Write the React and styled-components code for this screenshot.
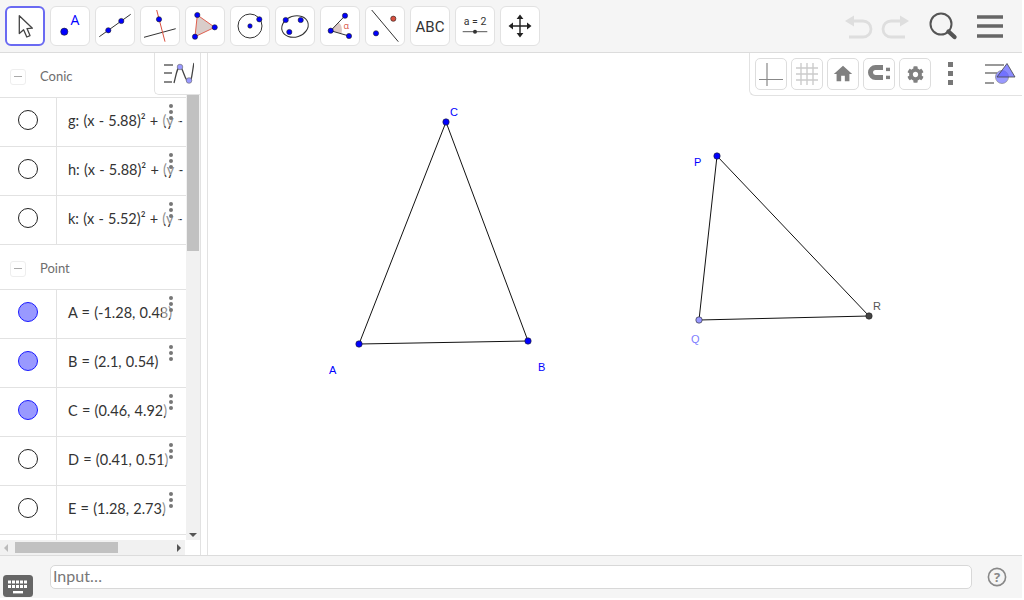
import React from "react";
import styled, { createGlobalStyle } from "styled-components";
import { MdHome } from "react-icons/md";
import { FaCog } from "react-icons/fa";

const GlobalStyle = createGlobalStyle`
  html, body {
    margin: 0;
    padding: 0;
    background: #fff;
    font-family: Lato, "Open Sans", "Liberation Sans", sans-serif;
  }
  * {
    box-sizing: border-box;
  }
`;

const Page = styled.div`
  width: 1022px;
  height: 598px;
  display: flex;
  flex-direction: column;
  overflow: hidden;
`;

const Toolbar = styled.div`
  height: 53px;
  flex: none;
  display: flex;
  align-items: flex-start;
  gap: 5px;
  padding: 6px 0 0 5px;
  background: #f5f5f5;
  border-bottom: 1px solid #dcdcdc;
`;

const ToolButton = styled.div`
  width: 40px;
  height: 40px;
  flex: none;
  background: #fff;
  border-radius: 6px;
  border: ${(props) => (props.$active ? "2px solid #6a6af2" : "1px solid #e2e2e2")};
  svg {
    display: block;
    margin: ${(props) => (props.$active ? "-2px" : "-1px")};
  }
`;

const ToolbarRight = styled.div`
  margin-left: auto;
  padding: 2px 2px 0 0;
  svg {
    display: block;
  }
`;

const Main = styled.div`
  flex: 1;
  min-height: 0;
  display: flex;
`;

const AlgebraPanel = styled.div`
  width: 201px;
  flex: none;
  position: relative;
  display: flex;
  flex-direction: column;
  border-right: 1px solid #e2e2e2;
`;

const AlgebraBody = styled.div`
  flex: 1;
  min-height: 0;
  display: flex;
`;

const AlgebraList = styled.div`
  width: 186px;
  flex: none;
  overflow: hidden;
  position: relative;
`;

const GroupHeader = styled.div`
  height: 45px;
  display: flex;
  align-items: center;
  gap: 14px;
  padding: 1px 0 0 10px;
  border-bottom: 1px solid #e2e2e2;
  color: #6e6e6e;
  font-size: 13px;
`;

const CollapseBox = styled.span`
  width: 16px;
  height: 16px;
  margin-top: 2px;
  display: flex;
  align-items: center;
  justify-content: center;
  border: 1px solid #eee;
  border-radius: 3px;
  &::before {
    content: "";
    width: 8px;
    height: 1px;
    background: #aaa;
  }
`;

const Row = styled.div`
  height: 49px;
  display: flex;
  position: relative;
  border-bottom: 1px solid #e2e2e2;
`;

const MarbleCell = styled.div`
  width: 57px;
  flex: none;
  display: flex;
  align-items: center;
  justify-content: center;
  padding-bottom: 5px;
  border-right: 1px solid #e2e2e2;
`;

const Marble = styled.span`
  width: 20px;
  height: 20px;
  border-radius: 50%;
  background: ${(props) => (props.$filled ? "#9999ff" : "#fff")};
  border: 1px solid ${(props) => (props.$filled ? "#1a1aff" : "#222")};
`;

const RowText = styled.div`
  flex: 1;
  padding: 13px 0 0 11px;
  font-size: 14.5px;
  word-spacing: 0.5px;
  line-height: 19px;
  color: #333;
  white-space: nowrap;
  overflow: hidden;
`;

const MoreButton = styled.div`
  position: absolute;
  left: 162px;
  top: 2px;
  width: 18px;
  height: 26px;
  display: flex;
  flex-direction: column;
  align-items: center;
  gap: 2.2px;
  padding-top: 4px;
  background: rgba(255, 255, 255, 0.45);
  span {
    width: 4px;
    height: 4px;
    border-radius: 50%;
    background: #777;
  }
`;

const VScrollTrack = styled.div`
  width: 14px;
  flex: none;
  background: #f1f1f1;
  margin-bottom: 15px;
  display: flex;
  flex-direction: column;
  align-items: center;
  justify-content: space-between;
  padding-bottom: 3px;
`;

const VScrollThumb = styled.div`
  width: 12px;
  height: 198px;
  margin-right: 1px;
  background: #c1c1c1;
`;

const DownArrow = styled.div`
  width: 0;
  height: 0;
  border-left: 4px solid transparent;
  border-right: 4px solid transparent;
  border-top: 4px solid #555;
`;

const HScrollTrack = styled.div`
  position: absolute;
  left: 0;
  bottom: 0;
  width: 185px;
  height: 15px;
  background: #f1f1f1;
  display: flex;
  align-items: center;
  padding: 0 4px 0 4px;
`;

const HScrollThumb = styled.div`
  width: 103px;
  height: 11px;
  margin-left: 7px;
  background: #c1c1c1;
`;

const Arrow = styled.div`
  width: 0;
  height: 0;
  border-top: 4px solid transparent;
  border-bottom: 4px solid transparent;
  border-right: ${(props) => (props.$left ? "4px solid #bbb" : "none")};
  border-left: ${(props) => (props.$left ? "none" : "4px solid #555")};
  margin-left: ${(props) => (props.$left ? "0" : "auto")};
`;

const ViewToggle = styled.div`
  position: absolute;
  top: 0;
  right: 0;
  width: 46px;
  height: 42px;
  background: #fff;
  border-left: 1px solid #e2e2e2;
  border-bottom: 1px solid #e2e2e2;
  border-bottom-left-radius: 5px;
  display: flex;
  align-items: center;
  justify-content: center;
`;

const Graphics = styled.div`
  flex: 1;
  margin-left: 6px;
  position: relative;
  border-left: 1px solid #e2e2e2;
  svg.canvas {
    display: block;
  }
`;

const StyleBar = styled.div`
  position: absolute;
  top: 0;
  right: 0;
  width: 273px;
  height: 43px;
  background: #fff;
  border-left: 1px solid #e2e2e2;
  border-bottom: 1px solid #e2e2e2;
  border-bottom-left-radius: 6px;
  display: flex;
  align-items: flex-start;
  gap: 4px;
  padding: 5px 0 0 5px;
`;

const StyleButton = styled.div`
  width: 32px;
  height: 32px;
  flex: none;
  border: 1px solid #ddd;
  border-radius: 5px;
  display: flex;
  align-items: center;
  justify-content: center;
  color: #808080;
`;

const StyleDots = styled.div`
  margin: 4px 0 0 13px;
  display: flex;
  flex-direction: column;
  gap: 4px;
  span {
    width: 5px;
    height: 5px;
    background: #777;
  }
`;

const StyleViewIcon = styled.div`
  margin: 5px 0 0 28px;
  svg {
    display: block;
  }
`;

const InputBar = styled.div`
  height: 43px;
  flex: none;
  display: flex;
  align-items: flex-start;
  background: #f5f5f5;
  border-top: 1px solid #dcdcdc;
  padding: 9px 0 0 0;
`;

const KeyboardButton = styled.div`
  width: 30px;
  height: 22px;
  margin: 10px 0 0 3px;
  svg {
    display: block;
  }
`;

const InputField = styled.div`
  width: 922px;
  height: 24px;
  margin-left: 17px;
  background: #fff;
  border: 1px solid #d8d8d8;
  border-radius: 5px;
  padding-left: 2px;
  font-size: 16px;
  line-height: 19px;
  color: #777;
`;

const HelpButton = styled.div`
  margin: 2px 0 0 15px;
  svg {
    display: block;
  }
`;

const Label = styled.text`
  font-family: "Liberation Sans", Arial, sans-serif;
  font-size: 11px;
  fill: ${(props) => props.$color || "#0000ff"};
`;

const conics = ["g: (x - 5.88)² + (y -", "h: (x - 5.88)² + (y -", "k: (x - 5.52)² + (y -"];

const points = [
  { text: "A = (-1.28, 0.48)", filled: true },
  { text: "B = (2.1, 0.54)", filled: true },
  { text: "C = (0.46, 4.92)", filled: true },
  { text: "D = (0.41, 0.51)" },
  { text: "E = (1.28, 2.73)" },
  { text: "" },
];

const Pt = ({ x, y, r = 2.6, fill = "#0000ff" }) => (
  <circle cx={x} cy={y} r={r} fill={fill} stroke="#222" strokeWidth="0.6" />
);

const Icon = ({ children }) => (
  <svg width="40" height="40" viewBox="0 0 40 40">
    {children}
  </svg>
);

const tools = [
  <Icon key="move">
    <path d="M14.3 9.7 L14.3 27.5 L18.6 23.8 L21.8 31 L25 29.6 L22 22.6 L27.4 22.2 Z" fill="#fff" stroke="#444" strokeWidth="1.3" strokeLinejoin="round" />
  </Icon>,
  <Icon key="point">
    <circle cx="14.3" cy="25.7" r="3.6" fill="#0000ff" stroke="#222" strokeWidth="0.6" />
    <text x="20.5" y="19" fontSize="14" fill="#0000ff" fontFamily="Open Sans">A</text>
  </Icon>,
  <Icon key="line">
    <line x1="4.3" y1="30.7" x2="35.7" y2="8.3" stroke="#333" strokeWidth="1" />
    <Pt x={13.3} y={24.3} />
    <Pt x={26.3} y={15} />
  </Icon>,
  <Icon key="perp">
    <line x1="4" y1="31.3" x2="35.7" y2="22.7" stroke="#333" strokeWidth="1" />
    <line x1="16.7" y1="4" x2="25" y2="35.7" stroke="#d9503f" strokeWidth="1" />
    <Pt x={19} y={13.3} />
  </Icon>,
  <Icon key="polygon">
    <polygon points="12.3,9 29.7,21.3 10,30.7" fill="#d9cdca" stroke="#e0604f" strokeWidth="1" />
    <Pt x={12.3} y={9} />
    <Pt x={29.7} y={21.3} />
    <Pt x={10} y={30.7} />
  </Icon>,
  <Icon key="circle">
    <circle cx="20" cy="20" r="12" fill="none" stroke="#333" strokeWidth="1" />
    <Pt x={20} y={20} r={2.2} />
    <Pt x={29.3} y={13.3} />
  </Icon>,
  <Icon key="conic">
    <ellipse cx="20" cy="20.5" rx="13.5" ry="10.5" transform="rotate(-18 20 20.5)" fill="none" stroke="#333" strokeWidth="1" />
    <Pt x={10.7} y={14} />
    <Pt x={25.7} y={14} />
    <Pt x={14.3} y={26} />
  </Icon>,
  <Icon key="angle">
    <path d="M10.7 24.7 L18.5 16 A12 12 0 0 1 21.5 27.5 Z" fill="#dcc8c4" />
    <path d="M25 9.7 L10.7 24.7 L29 30" fill="none" stroke="#333" strokeWidth="1" />
    <text x="23.5" y="23" fontSize="9" fill="#d9503f" fontFamily="Open Sans">α</text>
    <Pt x={25} y={9.7} />
    <Pt x={10.7} y={24.7} />
    <Pt x={29} y={30} />
  </Icon>,
  <Icon key="reflect">
    <line x1="6.7" y1="4" x2="33.3" y2="35.7" stroke="#333" strokeWidth="1" />
    <Pt x={28.3} y={12.7} fill="#d9503f" />
    <Pt x={11} y={27.3} />
  </Icon>,
  <Icon key="text">
    <text x="20" y="25.5" fontSize="15" textAnchor="middle" fill="#333" fontFamily="Roboto">ABC</text>
  </Icon>,
  <Icon key="slider">
    <text x="20" y="19" fontSize="10.5" textAnchor="middle" fill="#333" fontFamily="Roboto">a = 2</text>
    <line x1="7.7" y1="25.7" x2="32.3" y2="25.7" stroke="#555" strokeWidth="1" />
    <circle cx="20" cy="25.7" r="2" fill="#333" />
  </Icon>,
  <Icon key="moveview">
    <path d="M20 10 V30 M10 20 H30" stroke="#222" strokeWidth="1.4" />
    <path d="M20 8.5 L23.4 13 H16.6 Z M20 31.5 L23.4 27 H16.6 Z M8.5 20 L13 16.6 V23.4 Z M31.5 20 L27 16.6 V23.4 Z" fill="#222" />
  </Icon>,
];

const TopRightIcons = () => (
  <ToolbarRight>
    <svg width="176" height="36" viewBox="0 0 176 36">
      {/* undo / redo */}
      <g fill="none" stroke="#dedede" strokeWidth="2.8">
        <path d="M8 13 H19 A8 8 0 0 1 19 29 H5" />
        <path d="M58 13 H47 A8 8 0 0 0 47 29 H61" />
      </g>
      <path d="M1 13 L10 7.5 V18.5 Z M65 13 L56 7.5 V18.5 Z" fill="#dedede" />
      {/* search */}
      <circle cx="97" cy="16" r="10.5" fill="none" stroke="#555" strokeWidth="2" />
      <line x1="104.5" y1="23.5" x2="110.5" y2="29" stroke="#555" strokeWidth="4.4" strokeLinecap="round" />
      {/* menu */}
      <path d="M133 9 H159 M133 18 H159 M133 28 H159" stroke="#666" strokeWidth="3.4" />
    </svg>
  </ToolbarRight>
);

const Vertex = ({ at, color }) => (
  <circle cx={at[0]} cy={at[1]} r="3.2" fill={color} stroke="#222" strokeWidth="0.6" />
);

const Triangle = ({ a, b, c, color }) => (
  <g>
    <polygon
      points={`${a.join(",")} ${b.join(",")} ${c.join(",")}`}
      fill="none"
      stroke="#111"
      strokeWidth="1"
    />
    <Vertex at={a} color={color[0]} />
    <Vertex at={b} color={color[1]} />
    <Vertex at={c} color={color[2]} />
  </g>
);

const AlgebraRow = ({ text, filled }) => (
  <Row>
    <MarbleCell>
      <Marble $filled={filled} />
    </MarbleCell>
    <RowText>{text}</RowText>
    {text && (
      <MoreButton>
        <span />
        <span />
        <span />
      </MoreButton>
    )}
  </Row>
);

const App = () => {
  return (
    <Page>
      <GlobalStyle />
      <Toolbar>
        {tools.map((icon, i) => (
          <ToolButton key={i} $active={i === 0}>
            {icon}
          </ToolButton>
        ))}
        <TopRightIcons />
      </Toolbar>
      <Main>
        <AlgebraPanel>
          <AlgebraBody>
            <AlgebraList>
              <GroupHeader>
                <CollapseBox />
                Conic
              </GroupHeader>
              {conics.map((text) => (
                <AlgebraRow key={text} text={text} />
              ))}
              <GroupHeader>
                <CollapseBox />
                Point
              </GroupHeader>
              {points.map((p, i) => (
                <AlgebraRow key={i} text={p.text} filled={p.filled} />
              ))}
            </AlgebraList>
            <VScrollTrack>
              <VScrollThumb />
              <DownArrow />
            </VScrollTrack>
          </AlgebraBody>
          <HScrollTrack>
            <Arrow $left />
            <HScrollThumb />
            <Arrow />
          </HScrollTrack>
          <ViewToggle>
            <svg width="32" height="24" viewBox="0 0 32 24">
              <path d="M2 3 H11 M2 11 H10 M2 20 H10" stroke="#888" strokeWidth="2" />
              <path d="M12 21 C14.5 12 15 5 18 5 C21 5 23 20 27 20 C30 20 30 10 32 1" fill="none" stroke="#444" strokeWidth="1.3" />
              <circle cx="18" cy="5" r="2.8" fill="#9999ff" stroke="#666" strokeWidth="0.6" />
              <circle cx="27" cy="18.5" r="2.8" fill="#9999ff" stroke="#666" strokeWidth="0.6" />
            </svg>
          </ViewToggle>
        </AlgebraPanel>
        <Graphics>
          <svg className="canvas" width="814" height="502" viewBox="208 53 814 502">
            <Triangle
              a={[359, 344]}
              b={[528, 341]}
              c={[446, 122]}
              color={["#0000ff", "#0000ff", "#0000ff"]}
            />
            <Triangle
              a={[717, 156]}
              b={[699, 320]}
              c={[869, 316]}
              color={["#0000ff", "#9999ff", "#444"]}
            />
            <Label x="450" y="116">C</Label>
            <Label x="329" y="374">A</Label>
            <Label x="538" y="371">B</Label>
            <Label x="694" y="166">P</Label>
            <Label x="691" y="343" $color="#7f7fff">Q</Label>
            <Label x="873" y="310" $color="#555">R</Label>
          </svg>
          <StyleBar>
            <StyleButton>
              <svg width="26" height="26" viewBox="0 0 26 26">
                <path d="M1 18.5 H25 M9 2 V25" stroke="#888" strokeWidth="1.2" />
              </svg>
            </StyleButton>
            <StyleButton>
              <svg width="26" height="26" viewBox="0 0 26 26">
                <path d="M2 7 H24 M2 13 H24 M2 19 H24 M7 2 V24 M13 2 V24 M19 2 V24" stroke="#ccc" strokeWidth="1.4" />
              </svg>
            </StyleButton>
            <StyleButton>
              <MdHome size={22} />
            </StyleButton>
            <StyleButton>
              <svg width="26" height="26" viewBox="0 0 26 26">
                <path d="M17 6.5 H9.5 A5 5 0 0 0 9.5 16.5 H17" fill="none" stroke="#808080" strokeWidth="5" />
                <rect x="20" y="6.7" width="4" height="3.4" fill="#808080" />
                <rect x="20" y="14.7" width="4" height="3.4" fill="#808080" />
              </svg>
            </StyleButton>
            <StyleButton>
              <FaCog size={17} />
            </StyleButton>
            <StyleDots>
              <span />
              <span />
              <span />
            </StyleDots>
            <StyleViewIcon>
              <svg width="32" height="22" viewBox="0 0 32 22">
                <path d="M0 2 H19 M0 10 H12 M0 20 H9" stroke="#999" strokeWidth="2" />
                <circle cx="17" cy="14" r="6.5" fill="#9999ff" stroke="#777" strokeWidth="0.6" />
                <polygon points="22,0.5 30,14 12,14" fill="#6666ff" fillOpacity="0.75" stroke="#444" strokeWidth="0.8" />
              </svg>
            </StyleViewIcon>
          </StyleBar>
        </Graphics>
      </Main>
      <InputBar>
        <KeyboardButton>
          <svg width="30" height="22" viewBox="0 0 30 22">
            <rect x="0" y="0" width="30" height="22" rx="3.5" fill="#666" />
            <path d="M5 7 H24.5 M5 11.5 H24.5" stroke="#fff" strokeWidth="3" strokeDasharray="3 1" />
            <rect x="10" y="16" width="10" height="2.4" fill="#fff" />
          </svg>
        </KeyboardButton>
        <InputField>Input…</InputField>
        <HelpButton>
          <svg width="20" height="20" viewBox="0 0 20 20">
            <circle cx="10" cy="10" r="8.6" fill="none" stroke="#888" strokeWidth="1.6" />
            <text x="10" y="14.5" fontSize="13" fontWeight="700" textAnchor="middle" fill="#888" fontFamily="Open Sans">?</text>
          </svg>
        </HelpButton>
      </InputBar>
    </Page>
  );
};

export default App;
